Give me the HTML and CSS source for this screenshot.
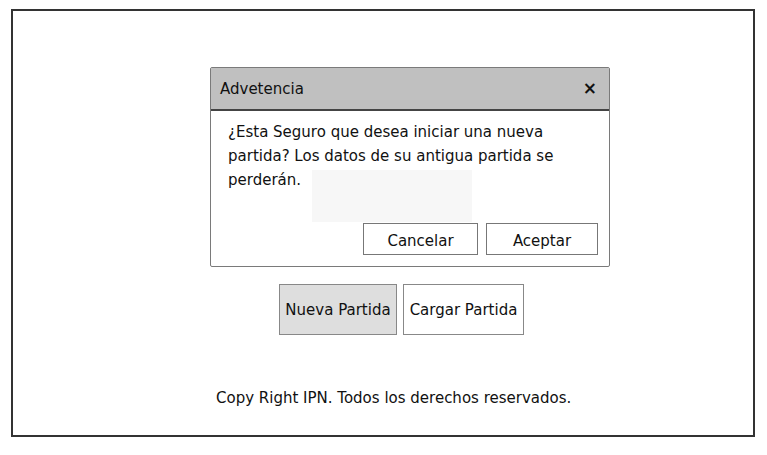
FILE: index.html
```html
<!DOCTYPE html>
<html lang="es">
<head>
<meta charset="utf-8">
<title>Advetencia</title>
<link rel="stylesheet" href="styles.css">
</head>
<body>
<div class="frame">
  <div class="dialog">
    <div class="dialog-header">
      <span class="dialog-title">Advetencia</span>
      <span class="dialog-close">×</span>
    </div>
    <div class="dialog-body">
      <p class="dialog-text">¿Esta Seguro que desea iniciar una nueva partida? Los datos de su antigua partida se perderán.</p>
      <div class="ghost"></div>
      <div class="dialog-actions">
        <button class="btn btn-cancel">Cancelar</button>
        <button class="btn btn-ok">Aceptar</button>
      </div>
    </div>
  </div>
  <div class="main-actions">
    <button class="big-btn big-btn-active">Nueva Partida</button>
    <button class="big-btn">Cargar Partida</button>
  </div>
  <p class="footer">Copy Right IPN. Todos los derechos reservados.</p>
</div>
</body>
</html>
```
FILE: styles.css
```css
html, body {
  margin: 0;
  padding: 0;
  background: #ffffff;
}
body {
  font-family: "DejaVu Sans", "Liberation Sans", sans-serif;
  color: #111;
}
.frame {
  box-sizing: border-box;
  margin: 9px 0 0 11px;
  width: 744px;
  height: 428px;
  border: 2px solid #333333;
  display: flex;
  flex-direction: column;
  align-items: flex-start;
}
.dialog {
  box-sizing: border-box;
  margin: 56px 0 0 197px;
  width: 400px;
  height: 200px;
  border: 1px solid #7a7a7a;
  border-radius: 2px;
  display: flex;
  flex-direction: column;
  background: #fff;
}
.dialog-header {
  box-sizing: border-box;
  height: 43px;
  background: #c0c0c0;
  border-bottom: 2px solid #444;
  display: flex;
  align-items: center;
  justify-content: space-between;
  padding: 0 12px 0 9px;
}
.dialog-title {
  font-size: 15px;
}
.dialog-close {
  font-size: 17px;
  font-weight: bold;
  line-height: 1;
}
.dialog-body {
  position: relative;
  flex: 1;
  display: flex;
  flex-direction: column;
  padding: 0 11px 11px 17px;
}
.dialog-text {
  margin: 9px 0 0 0;
  font-size: 15px;
  line-height: 24px;
  width: 366px;
  position: relative;
  z-index: 1;
}
.ghost {
  position: absolute;
  left: 101px;
  top: 59px;
  width: 160px;
  height: 52px;
  background: #f7f7f7;
}
.dialog-actions {
  margin-top: auto;
  display: flex;
  justify-content: flex-end;
  gap: 8px;
  position: relative;
  z-index: 1;
}
.btn {
  box-sizing: border-box;
  height: 32px;
  background: #fff;
  border: 1px solid #777;
  font-family: inherit;
  font-size: 15px;
  color: #111;
  padding: 3px 0 0 0;
}
.btn-cancel { width: 115px; }
.btn-ok { width: 112px; }
.main-actions {
  margin: 17px 0 0 266px;
  display: flex;
  gap: 6px;
}
.big-btn {
  box-sizing: border-box;
  height: 51px;
  width: 121px;
  background: #fff;
  border: 1px solid #888;
  font-family: inherit;
  font-size: 15px;
  color: #111;
  padding: 0;
}
.big-btn-active {
  width: 118px;
  background: #dedede;
}
.footer {
  margin: 53px 0 0 203px;
  font-size: 15px;
  line-height: 20px;
}
```
